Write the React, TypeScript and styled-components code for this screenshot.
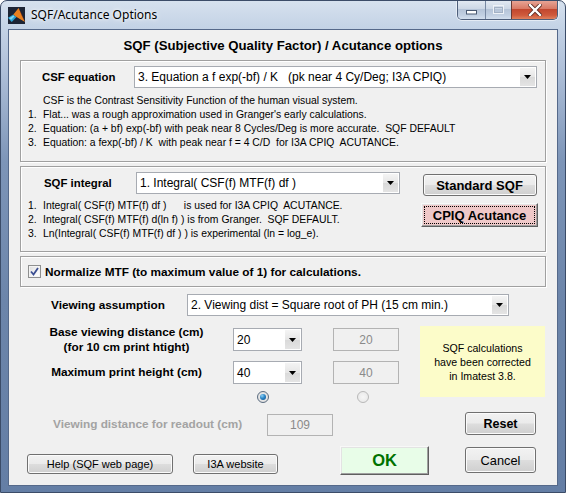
import React from 'react';
import styled, { createGlobalStyle } from 'styled-components';

const Global = createGlobalStyle`
  html, body { margin: 0; padding: 0; background: #ffffff; }
  body { width: 566px; height: 493px; overflow: hidden; }
  * { box-sizing: border-box; }
`;

const SANS = `"Liberation Sans", Arial, sans-serif`;

const Window = styled.div`
  width: 566px;
  height: 493px;
  border: 1px solid #3b4c68;
  border-radius: 7px 7px 0 0;
  background: linear-gradient(180deg, #d6e1ee 0px, #c4d3e6 26px, #aebfd8 70px, #7d95b8 160px, #6c85aa 300px, #647ea5 100%);
  display: flex;
  flex-direction: column;
  overflow: hidden;
`;

const TitleBar = styled.div`
  height: 28px;
  display: flex;
  align-items: flex-start;
  flex: none;
`;

const AppIcon = styled.svg`
  margin: 6px 0 0 7px;
  flex: none;
`;

const TitleText = styled.div`
  margin: 6px 0 0 6px;
  font: 12px/16px "Noto Sans", "Open Sans", sans-serif;
  color: #000;
  text-shadow: 0 0 6px rgba(255, 255, 255, 0.9), 0 0 3px rgba(255, 255, 255, 0.9);
  flex: 1;
`;

const CaptionGroup = styled.div`
  display: flex;
  height: 20px;
  margin-top: -1px;
  margin-right: 7px;
  border: 1px solid #4d5e7a;
  border-top: none;
  border-radius: 0 0 5px 5px;
  overflow: hidden;
  box-shadow: 0 0 0 1px rgba(255, 255, 255, 0.5);
`;

const CaptionBtn = styled.div<{ $w: number; $close?: boolean }>`
  width: ${(p) => p.$w}px;
  height: 100%;
  display: flex;
  align-items: center;
  justify-content: center;
  border-left: ${(p) => (p.$close ? '1px solid #6b3a34' : '1px solid #7788a2')};
  background: ${(p) =>
    p.$close
      ? 'linear-gradient(180deg, #e9a99b 0%, #d97a66 45%, #c2472f 50%, #cf5a3c 80%, #e0815e 100%)'
      : 'linear-gradient(180deg, #e4ebf3 0%, #cdd8e6 45%, #b5c4d8 50%, #c2d0e2 80%, #d3dfee 100%)'};
  &:first-child { border-left: none; }
`;

const Client = styled.div`
  flex: 1;
  margin: 0 7px 6px 7px;
  border: 1px solid #55698a;
  background: #f0f0f0;
  display: flex;
  flex-direction: column;
  font-family: ${SANS};
  color: #000;
`;

const Heading = styled.div`
  margin-top: 8px;
  font: bold 13.2px/16px ${SANS};
  text-align: center;
`;

const Panel = styled.div<{ $mt: number }>`
  margin: ${(p) => p.$mt}px 11px 0;
  border: 1px solid #a0a0a0;
  box-shadow: 1px 1px 0 #ffffff, inset 1px 1px 0 #ffffff;
`;

const FieldRow = styled.div<{ $pl: number }>`
  display: flex;
  align-items: center;
  padding-left: ${(p) => p.$pl}px;
`;

const FieldLabel = styled.div<{ $w: number; $size?: number }>`
  width: ${(p) => p.$w}px;
  flex: none;
  font: bold ${(p) => p.$size ?? 11.4}px/14px ${SANS};
  white-space: nowrap;
`;

const Select = styled.div<{ $w: number; $h: number }>`
  width: ${(p) => p.$w}px;
  height: ${(p) => p.$h}px;
  flex: none;
  border: 1px solid #a7abb2;
  background: #ffffff;
  display: flex;
  align-items: stretch;
  font: 12px ${SANS};
`;

const SelectText = styled.span<{ $pl?: number }>`
  flex: 1;
  padding-left: ${(p) => p.$pl ?? 3}px;
  display: flex;
  align-items: center;
  white-space: pre;
  overflow: hidden;
`;

const SelectArrow = styled.span`
  width: 15px;
  margin: 1px;
  display: flex;
  align-items: center;
  justify-content: center;
  background: linear-gradient(180deg, #f4f4f4 0%, #e6e6e6 50%, #d9d9d9 51%, #e4e4e4 100%);
`;

const TextBlock = styled.div<{ $pt: number; $pb: number; $lh: number }>`
  padding: ${(p) => p.$pt}px 0 ${(p) => p.$pb}px 7px;
  font: 10.4px/${(p) => p.$lh}px ${SANS};
`;

const Line = styled.div`
  display: flex;
  white-space: pre;
`;

const Num = styled.span`
  width: 15px;
  flex: none;
`;

const Panel2Body = styled.div`
  display: flex;
`;

const LeftCol = styled.div`
  width: 379px;
  padding-top: 5px;
`;

const RightCol = styled.div`
  margin-left: 21px;
  width: 117px;
  padding-top: 7px;
  display: flex;
  flex-direction: column;
  align-items: center;
`;

const Button = styled.div<{ $w: number; $h: number; $bold?: boolean; $size?: number }>`
  width: ${(p) => p.$w}px;
  height: ${(p) => p.$h}px;
  flex: none;
  border: 1px solid #707070;
  border-radius: 3px;
  background: linear-gradient(180deg, #f2f2f2 0%, #ebebeb 48%, #dddddd 52%, #cfcfcf 100%);
  box-shadow: inset 0 0 0 1px #fbfbfb;
  display: flex;
  align-items: center;
  justify-content: center;
  font: ${(p) => (p.$bold ? 'bold' : 'normal')} ${(p) => p.$size ?? 12}px ${SANS};
  white-space: pre;
`;

const ClassicButton = styled.div<{ $w: number; $h: number; $bg: string }>`
  width: ${(p) => p.$w}px;
  height: ${(p) => p.$h}px;
  flex: none;
  background: ${(p) => p.$bg};
  border: 1px solid;
  border-color: #f8f8f8 #5f5f5f #5f5f5f #f8f8f8;
  box-shadow: inset -1px -1px 0 #a0a0a0, inset 1px 1px 0 #e3e3e3;
  display: flex;
  align-items: center;
  justify-content: center;
  padding: 2px;
`;

const FocusRing = styled.span`
  flex: 1;
  align-self: stretch;
  border: 1px dotted #000;
  display: flex;
  align-items: center;
  justify-content: center;
  font: bold 13px ${SANS};
`;

const OkText = styled.span`
  font: bold 16.5px ${SANS};
  color: #007200;
`;

const CheckRow = styled.div`
  height: 29px;
  display: flex;
  align-items: center;
  padding-left: 7px;
`;

const CheckBox = styled.span`
  width: 13px;
  height: 13px;
  flex: none;
  border: 1px solid #8e8f8f;
  background: linear-gradient(135deg, #dcdcdc 0%, #f6f6f6 60%, #ffffff 100%);
  box-shadow: inset 0 0 0 1px #f4f4f4;
  display: flex;
  align-items: center;
  justify-content: center;
`;

const CheckLabel = styled.span`
  margin-left: 4px;
  font: bold 11.8px ${SANS};
`;

const Grid = styled.div`
  margin: 8.5px 11px 0;
  display: grid;
  grid-template-columns: 213px 69px 31px 66px 21px 125px;
  grid-template-rows: 30px 23px 12px;
  row-gap: 6.5px;
`;

const GridLabel = styled.div<{ $row: number }>`
  grid-column: 1;
  grid-row: ${(p) => p.$row};
  align-self: center;
  text-align: center;
  font: bold 11.8px/15px ${SANS};
`;

const Cell = styled.div<{ $col: number; $row: number }>`
  grid-column: ${(p) => p.$col};
  grid-row: ${(p) => p.$row};
  align-self: center;
`;

const Edit = styled.div<{ $w: number; $h: number }>`
  width: ${(p) => p.$w}px;
  height: ${(p) => p.$h}px;
  flex: none;
  border: 1px solid #b3b3b3;
  color: #8a8a8a;
  font: 12px ${SANS};
  display: flex;
  align-items: center;
  justify-content: center;
`;

const Radio = styled.span<{ $on?: boolean }>`
  width: 12px;
  height: 12px;
  margin-left: 24px;
  border-radius: 50%;
  border: 1px solid ${(p) => (p.$on ? '#5b6c80' : '#b8b8b8')};
  background: ${(p) =>
    p.$on
      ? 'radial-gradient(circle at 50% 50%, #f4f4f4 0%, #d8d8d8 100%)'
      : 'radial-gradient(circle at 50% 50%, #f6f6f6 0%, #e6e6e6 100%)'};
  display: flex;
  align-items: center;
  justify-content: center;
`;

const RadioDot = styled.span`
  width: 6px;
  height: 6px;
  border-radius: 50%;
  background: radial-gradient(circle at 35% 30%, #8fd0f5 0%, #2b86c7 45%, #0d4a86 100%);
`;

const Note = styled.div`
  grid-column: 6;
  grid-row: 1 / 4;
  align-self: start;
  margin-top: 1.5px;
  height: 71px;
  background: #fcfcc9;
  display: flex;
  align-items: center;
  justify-content: center;
  text-align: center;
  font: 10.6px/14px ${SANS};
`;

const ReadoutRow = styled.div`
  margin-top: 9.5px;
  padding-left: 44px;
  display: flex;
  align-items: flex-start;
`;

const GrayLabel = styled.div`
  width: 214px;
  margin-top: 1px;
  flex: none;
  font: bold 11.8px/22px ${SANS};
  color: #a3a3a3;
  white-space: nowrap;
`;

const Spacer = styled.div<{ $w: number; $mt?: number }>`
  margin-left: ${(p) => p.$w}px;
  margin-top: ${(p) => p.$mt ?? 0}px;
  flex: none;
`;

const BottomRow = styled.div`
  margin-top: 10px;
  padding-left: 18px;
  display: flex;
  align-items: flex-start;
`;

const Arrow = () => (
  <svg width="7" height="4" viewBox="0 0 7 4">
    <polygon points="0,0 7,0 3.5,4" fill="#000" />
  </svg>
);

const Dropdown = ({ w, h, text, pl }: { w: number; h: number; text: string; pl?: number }) => (
  <Select $w={w} $h={h}>
    <SelectText $pl={pl}>{text}</SelectText>
    <SelectArrow>
      <Arrow />
    </SelectArrow>
  </Select>
);

export default function App() {
  return (
    <>
      <Global />
      <Window>
        <TitleBar>
          <AppIcon width="17" height="17" viewBox="0 0 16 16">
            <rect width="16" height="16" fill="#1c2434" />
            <polygon points="0,10 5,7 8,9.5 3.5,14" fill="#2aa3d6" />
            <polygon points="1,10.5 5,8 6,9 3,12" fill="#7fd6f2" />
            <polygon points="5,7 10,1 13,8 16,14 8,9.5" fill="#e8801f" />
            <polygon points="10,1 12.5,6 16,14 13,8" fill="#b8360f" />
          </AppIcon>
          <TitleText>SQF/Acutance Options</TitleText>
          <CaptionGroup>
            <CaptionBtn $w={27}>
              <svg width="11" height="10" viewBox="0 0 11 10">
                <rect x="0.5" y="5.5" width="10" height="3.5" fill="#ffffff" stroke="#4a5a72" strokeWidth="1" />
              </svg>
            </CaptionBtn>
            <CaptionBtn $w={26}>
              <svg width="11" height="10" viewBox="0 0 11 10">
                <rect x="0.5" y="0.5" width="10" height="8" fill="none" stroke="#eef2f7" strokeWidth="1" />
                <rect x="1.5" y="2.5" width="8" height="5" fill="none" stroke="#a3b1c4" strokeWidth="1" />
              </svg>
            </CaptionBtn>
            <CaptionBtn $w={46} $close>
              <svg width="14" height="12" viewBox="0 0 14 12">
                <path d="M2 1 L12 11 M12 1 L2 11" stroke="#5a2a22" strokeWidth="4" strokeLinecap="square" />
                <path d="M2 1 L12 11 M12 1 L2 11" stroke="#ffffff" strokeWidth="2.4" strokeLinecap="square" />
              </svg>
            </CaptionBtn>
          </CaptionGroup>
        </TitleBar>
        <Client>
          <Heading>SQF (Subjective Quality Factor) / Acutance options</Heading>

          <Panel $mt={6}>
            <FieldRow $pl={21} style={{ paddingTop: 5 }}>
              <FieldLabel $w={92}>CSF equation</FieldLabel>
              <Dropdown w={403} h={22} text={'3. Equation a f exp(-bf) / K   (pk near 4 Cy/Deg; I3A CPIQ)'} />
            </FieldRow>
            <TextBlock $pt={5.5} $pb={10.7} $lh={14.2}>
              <Line>
                <Num />
                CSF is the Contrast Sensitivity Function of the human visual system.
              </Line>
              <Line>
                <Num>1.</Num>Flat... was a rough approximation used in Granger's early calculations.
              </Line>
              <Line>
                <Num>2.</Num>Equation: (a + bf) exp(-bf) with peak near 8 Cycles/Deg is more accurate.  SQF DEFAULT
              </Line>
              <Line>
                <Num>3.</Num>Equation: a fexp(-bf) / K  with peak near f = 4 C/D  for I3A CPIQ  ACUTANCE.
              </Line>
            </TextBlock>
          </Panel>

          <Panel $mt={4}>
            <Panel2Body>
              <LeftCol>
                <FieldRow $pl={23}>
                  <FieldLabel $w={92}>SQF integral</FieldLabel>
                  <Dropdown w={264} h={22} text={'1. Integral( CSF(f) MTF(f) df )'} />
                </FieldRow>
                <TextBlock $pt={5} $pb={10} $lh={14}>
                  <Line>
                    <Num>1.</Num>Integral( CSF(f) MTF(f) df )      is used for I3A CPIQ  ACUTANCE.
                  </Line>
                  <Line>
                    <Num>2.</Num>Integral( CSF(f) MTF(f) d(ln f) ) is from Granger.  SQF DEFAULT.
                  </Line>
                  <Line>
                    <Num>3.</Num>Ln(Integral( CSF(f) MTF(f) df ) ) is experimental (ln = log_e).
                  </Line>
                </TextBlock>
              </LeftCol>
              <RightCol>
                <Button $w={114} $h={22} $bold $size={13}>
                  Standard SQF
                </Button>
                <Spacer $w={0} $mt={7}>
                  <ClassicButton $w={117} $h={24} $bg="#efc8c8">
                    <FocusRing>CPIQ Acutance</FocusRing>
                  </ClassicButton>
                </Spacer>
              </RightCol>
            </Panel2Body>
          </Panel>

          <Panel $mt={4}>
            <CheckRow>
              <CheckBox>
                <svg width="9" height="9" viewBox="0 0 9 9">
                  <path d="M1 4.5 L3.5 7.5 L8 1" fill="none" stroke="#3c4f92" strokeWidth="1.8" />
                </svg>
              </CheckBox>
              <CheckLabel>Normalize MTF (to maximum value of 1) for calculations.</CheckLabel>
            </CheckRow>
          </Panel>

          <FieldRow $pl={42} style={{ marginTop: 7 }}>
            <FieldLabel $w={136} $size={11.8}>
              Viewing assumption
            </FieldLabel>
            <Dropdown w={322} h={22} text={'2. Viewing dist = Square root of PH (15 cm min.)'} />
          </FieldRow>

          <Grid>
            <GridLabel $row={1}>
              Base viewing distance (cm)
              <br />
              (for 10 cm print htight)
            </GridLabel>
            <Cell $col={2} $row={1}>
              <Dropdown w={69} h={23} text="20" />
            </Cell>
            <Cell $col={4} $row={1}>
              <Edit $w={66} $h={23}>20</Edit>
            </Cell>
            <GridLabel $row={2}>Maximum print height (cm)</GridLabel>
            <Cell $col={2} $row={2}>
              <Dropdown w={69} h={23} text="40" />
            </Cell>
            <Cell $col={4} $row={2}>
              <Edit $w={66} $h={23}>40</Edit>
            </Cell>
            <Cell $col={2} $row={3}>
              <Radio $on>
                <RadioDot />
              </Radio>
            </Cell>
            <Cell $col={4} $row={3}>
              <Radio />
            </Cell>
            <Note>
              SQF calculations
              <br />
              have been corrected
              <br />
              in Imatest 3.8.
            </Note>
          </Grid>

          <ReadoutRow>
            <GrayLabel>Viewing distance for readout (cm)</GrayLabel>
            <Spacer $w={0} $mt={2}>
              <Edit $w={66} $h={22}>109</Edit>
            </Spacer>
            <Spacer $w={132}>
              <Button $w={71} $h={23} $bold $size={12.5}>
                Reset
              </Button>
            </Spacer>
          </ReadoutRow>

          <BottomRow>
            <Spacer $w={0} $mt={8}>
              <Button $w={146} $h={20} $size={11}>
                Help (SQF web page)
              </Button>
            </Spacer>
            <Spacer $w={20} $mt={8}>
              <Button $w={85} $h={20} $size={11}>
                I3A website
              </Button>
            </Spacer>
            <Spacer $w={62}>
              <ClassicButton $w={89} $h={29} $bg="#e8fde8">
                <OkText>OK</OkText>
              </ClassicButton>
            </Spacer>
            <Spacer $w={36} $mt={1}>
              <Button $w={71} $h={26} $size={12.8}>
                Cancel
              </Button>
            </Spacer>
          </BottomRow>
        </Client>
      </Window>
    </>
  );
}
